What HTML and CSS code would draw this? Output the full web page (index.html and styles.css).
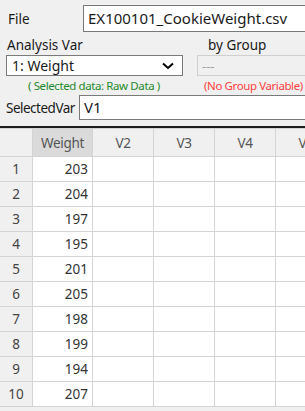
FILE: index.html
```html
<!DOCTYPE html>
<html lang="en">
<head>
  <meta charset="UTF-8">
  <title>Cookie Weight</title>
  <link rel="stylesheet" href="styles.css">
</head>
<body>

  <!-- File / variable pickers -->
  <div class="panel">
    <div class="file-row">
      <span class="label file-label">File</span>
      <div class="file-box">EX100101_CookieWeight.csv</div>
    </div>

    <div class="var-row">
      <div class="var-col">
        <div class="label">Analysis Var</div>
        <div class="select-box">
          <span>1: Weight</span>
          <svg class="chevron" width="12" height="8" viewBox="0 0 12 8">
            <path d="M1 1.5 L6 6 L11 1.5" fill="none" stroke="#000" stroke-width="2"/>
          </svg>
        </div>
        <div class="note note-green">( Selected data: Raw Data )</div>
      </div>
      <div class="group-col">
        <div class="label group-label">by Group</div>
        <div class="select-box disabled">---</div>
        <div class="note note-red">(No Group Variable)</div>
      </div>
    </div>

    <div class="selected-row">
      <span class="label">SelectedVar</span>
      <div class="selected-box">V1</div>
    </div>
  </div>

  <!-- Data grid -->
  <table class="grid">
    <thead>
      <tr>
        <th class="corner"></th>
        <th class="active">Weight</th>
        <th>V2</th>
        <th>V3</th>
        <th>V4</th>
        <th>V5</th>
      </tr>
    </thead>
    <tbody>
      <tr><th>1</th><td>203</td><td></td><td></td><td></td><td></td></tr>
      <tr><th>2</th><td>204</td><td></td><td></td><td></td><td></td></tr>
      <tr><th>3</th><td>197</td><td></td><td></td><td></td><td></td></tr>
      <tr><th>4</th><td>195</td><td></td><td></td><td></td><td></td></tr>
      <tr><th>5</th><td>201</td><td></td><td></td><td></td><td></td></tr>
      <tr><th>6</th><td>205</td><td></td><td></td><td></td><td></td></tr>
      <tr><th>7</th><td>198</td><td></td><td></td><td></td><td></td></tr>
      <tr><th>8</th><td>199</td><td></td><td></td><td></td><td></td></tr>
      <tr><th>9</th><td>194</td><td></td><td></td><td></td><td></td></tr>
      <tr><th>10</th><td>207</td><td></td><td></td><td></td><td></td></tr>
    </tbody>
  </table>

</body>
</html>
```

FILE: styles.css
```css
html, body {
  margin: 0;
  height: 100%;
  overflow: hidden;
}
body {
  font-family: 'Noto Sans', sans-serif;
  background-color: #f0f0f0;
  color: #1a1a1a;
  width: 305px;
}
.panel {
  padding-top: 5px;
  height: 121px;
  border-bottom: 2px solid #1e1e1e;
}
.label {
  flex: none;
  font-size: 13.5px;
  line-height: 18px;
  white-space: nowrap;
}
.file-row {
  display: flex;
  align-items: center;
  height: 27px;
}
.file-label {
  width: 75px;
  padding-left: 8px;
}
.file-box {
  flex: none;
  width: 240px;
  height: 25px;
  border: 1px solid #7a7a7a;
  border-right: none;
  background: #fff;
  font-size: 15px;
  line-height: 25px;
  padding-left: 4px;
  white-space: nowrap;
}
.var-row {
  display: flex;
  margin-top: 4px;
}
.var-col {
  flex: none;
  width: 177px;
  margin-left: 6px;
}
.var-col .label {
  padding-left: 1px;
}
.select-box {
  display: flex;
  align-items: center;
  justify-content: space-between;
  box-sizing: border-box;
  height: 21px;
  margin-top: 1px;
  border: 1px solid #7a7a7a;
  background: #fff;
  font-size: 14px;
  padding: 0 8px 0 5px;
  white-space: nowrap;
}
.chevron {
  display: block;
}
.group-col {
  flex: none;
  margin-left: 14px;
  width: 120px;
}
.group-label {
  padding-left: 11px;
}
.select-box.disabled {
  background: #f0f0f0;
  border-color: #cfcfcf;
  color: #a0a0a0;
  font-size: 13px;
  padding-left: 4px;
}
.note {
  font-size: 11.5px;
  line-height: 17px;
  margin-top: 1px;
  letter-spacing: -0.4px;
  white-space: nowrap;
}
.note-green {
  color: #1f8a2a;
  padding-left: 22px;
}
.note-red {
  color: #ff4040;
  padding-left: 7px;
}
.selected-row {
  display: flex;
  align-items: center;
  margin-top: 1px;
  height: 25px;
}
.selected-row .label {
  width: 73px;
  padding-left: 6px;
  letter-spacing: -0.5px;
}
.selected-box {
  flex: none;
  width: 240px;
  height: 23px;
  border: 1px solid #7a7a7a;
  border-right: none;
  background: #fff;
  font-size: 15px;
  line-height: 23px;
  padding-left: 4px;
}
.grid {
  border-collapse: collapse;
  table-layout: fixed;
  width: 337px;
  font-size: 13.5px;
}
.grid th, .grid td {
  border: 1px solid #d4d4d4;
  padding: 0;
  height: 24px;
  line-height: 18px;
  white-space: nowrap;
  overflow: hidden;
}
.grid thead th {
  height: 27px;
  background: #f0f0f0;
  color: #555;
  font-weight: normal;
  font-size: 13.5px;
  letter-spacing: -0.3px;
  width: 60px;
}
.grid thead th.corner {
  width: 32px;
}
.grid thead th.active {
  background: #dadada;
  width: 59px;
}
.grid tbody th {
  background: #f0f0f0;
  color: #444;
  font-weight: normal;
  text-align: center;
}
.grid td {
  background: #fff;
  color: #333;
  text-align: right;
  padding-right: 4px;
}
.grid tr > :first-child {
  border-left: none;
}
```
